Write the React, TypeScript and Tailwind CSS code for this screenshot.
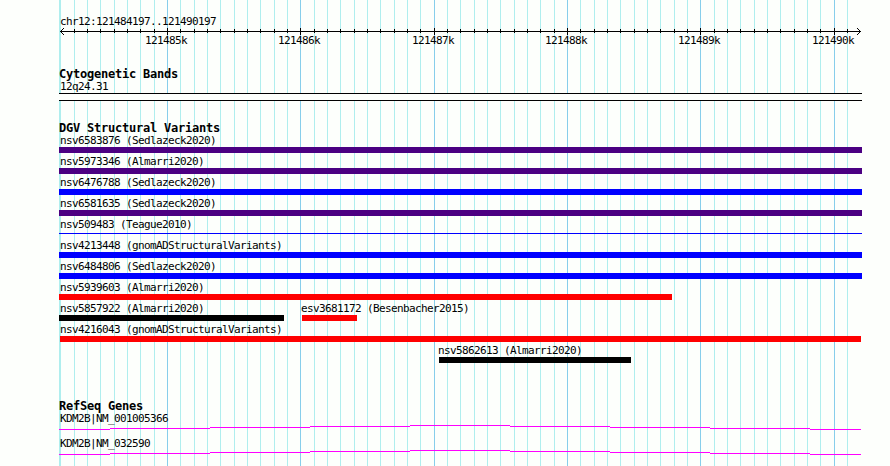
import { clsx } from 'clsx';

type Feature = { label: string; start: number; end: number; color: string; thin?: boolean };

const LEFT = 59;
const RIGHT = 862;

// grid: one line per 100 bp, every tenth is a kilobase line
const gridLines = Array.from({ length: 60 }, (_, i) => ({
  x: Math.round(60.33 + (i * 40) / 3),
  major: i % 10 === 8,
}));

const kbLabels = ['121485k', '121486k', '121487k', '121488k', '121489k', '121490k'];

const INDIGO = 'bg-[#4b0082]';
const BLUE = 'bg-[#0000ff]';
const RED = 'bg-[#ff0000]';
const BLACK = 'bg-black';

const variantLanes: Feature[][] = [
  [{ label: 'nsv6583876 (Sedlazeck2020)', start: 59, end: 862, color: INDIGO }],
  [{ label: 'nsv5973346 (Almarri2020)', start: 59, end: 862, color: INDIGO }],
  [{ label: 'nsv6476788 (Sedlazeck2020)', start: 59, end: 862, color: BLUE }],
  [{ label: 'nsv6581635 (Sedlazeck2020)', start: 59, end: 862, color: INDIGO }],
  [{ label: 'nsv509483 (Teague2010)', start: 59, end: 862, color: BLUE, thin: true }],
  [{ label: 'nsv4213448 (gnomADStructuralVariants)', start: 59, end: 862, color: BLUE }],
  [{ label: 'nsv6484806 (Sedlazeck2020)', start: 59, end: 862, color: BLUE }],
  [{ label: 'nsv5939603 (Almarri2020)', start: 59, end: 672, color: RED }],
  [
    { label: 'nsv5857922 (Almarri2020)', start: 59, end: 284, color: BLACK },
    { label: 'esv3681172 (Besenbacher2015)', start: 302, end: 357, color: RED },
  ],
  [{ label: 'nsv4216043 (gnomADStructuralVariants)', start: 60, end: 861, color: RED }],
  [{ label: 'nsv5862613 (Almarri2020)', start: 439, end: 631, color: BLACK }],
];

const genes = ['KDM2B|NM_001005366', 'KDM2B|NM_032590'];

// intron line, [from, to, y]
const intronSteps = [
  [59, 110, 4], [110, 210, 3], [210, 310, 2], [310, 410, 1], [410, 510, 0],
  [510, 610, 1], [610, 710, 2], [710, 810, 3], [810, 861, 4],
];

function Grid() {
  return (
    <svg className="absolute inset-0" width="890" height="466" shapeRendering="crispEdges">
      <rect x={LEFT} y="0" width="1" height="466" fill="#afeeee" />
      {gridLines.map(l => (
        <rect key={l.x} x={l.x} y="0" width="1" height="466" fill={l.major ? '#87ceeb' : '#afeeee'} />
      ))}
    </svg>
  );
}

function Ruler() {
  return (
    <svg className="block" width="890" height="20" shapeRendering="crispEdges">
      <rect x="60" y="3" width="801" height="1" />
      {gridLines.slice(1).map(l => (
        <rect key={l.x} x={l.x} y={l.major ? 0 : 1} width="1" height={l.major ? 7 : 4} />
      ))}
      {[1, 2, 3].map(d => (
        <g key={d}>
          <rect x={60 + d} y={3 - d} width="1" height="1" />
          <rect x={60 + d} y={3 + d} width="1" height="1" />
          <rect x={860 - d} y={3 - d} width="1" height="1" />
          <rect x={860 - d} y={3 + d} width="1" height="1" />
        </g>
      ))}
      {gridLines.filter(l => l.major).map((l, i) => (
        <text key={l.x} x={l.x - 22} y="16">{kbLabels[i]}</text>
      ))}
    </svg>
  );
}

function TrackTitle({ children }: { children: string }) {
  return (
    <h2 className="h-[13px] pl-[59px] text-[12px] leading-[15px] font-bold tracking-[-0.224px]">
      {children}
    </h2>
  );
}

function Lane({ features }: { features: Feature[] }) {
  return (
    <div className="flex h-[21px]">
      {features.map((f, i) => (
        <div
          key={f.label}
          className="shrink-0"
          style={{ marginLeft: f.start - (i ? features[i - 1].end : 0), width: f.end - f.start }}
        >
          <p className="h-[13px]" style={{ marginLeft: Math.max(60, f.start - 1) - f.start }}>
            {f.label}
          </p>
          <div className={clsx(f.color, f.thin ? 'mt-[2px] h-px' : 'h-[6px]')} />
        </div>
      ))}
    </div>
  );
}

export default function App() {
  return (
    <div className="relative h-[466px] w-[890px] overflow-hidden bg-[#fdfffc] font-['DejaVu_Sans_Mono',monospace] text-[11px] leading-[13px] tracking-[-0.622px] whitespace-nowrap text-black">
      <Grid />
      <main className="relative pt-[15px]">
        <p className="h-[13px] pl-[60px]">chr12:121484197..121490197</p>
        <Ruler />

        <section className="mt-[19px]">
          <TrackTitle>Cytogenetic Bands</TrackTitle>
          <p className="h-[13px] pl-[60px]">12q24.31</p>
          <div className="ml-[59px] h-[8px] border-y border-black bg-[#fdfffc]" style={{ width: RIGHT - LEFT }} />
        </section>

        <section className="mt-[20px]">
          <TrackTitle>DGV Structural Variants</TrackTitle>
          {variantLanes.map(lane => (
            <Lane key={lane[0].label} features={lane} />
          ))}
        </section>

        <section className="mt-[34px]">
          <TrackTitle>RefSeq Genes</TrackTitle>
          {genes.map(gene => (
            <div key={gene} className="h-[25px]">
              <p className="h-[13px] pl-[60px]">{gene}</p>
              <svg className="block" width="890" height="5" shapeRendering="crispEdges">
                {intronSteps.map(([from, to, y]) => (
                  <rect key={from} x={from} y={y} width={to - from} height="1" fill="#ff00ff" />
                ))}
              </svg>
            </div>
          ))}
        </section>
      </main>
    </div>
  );
}
